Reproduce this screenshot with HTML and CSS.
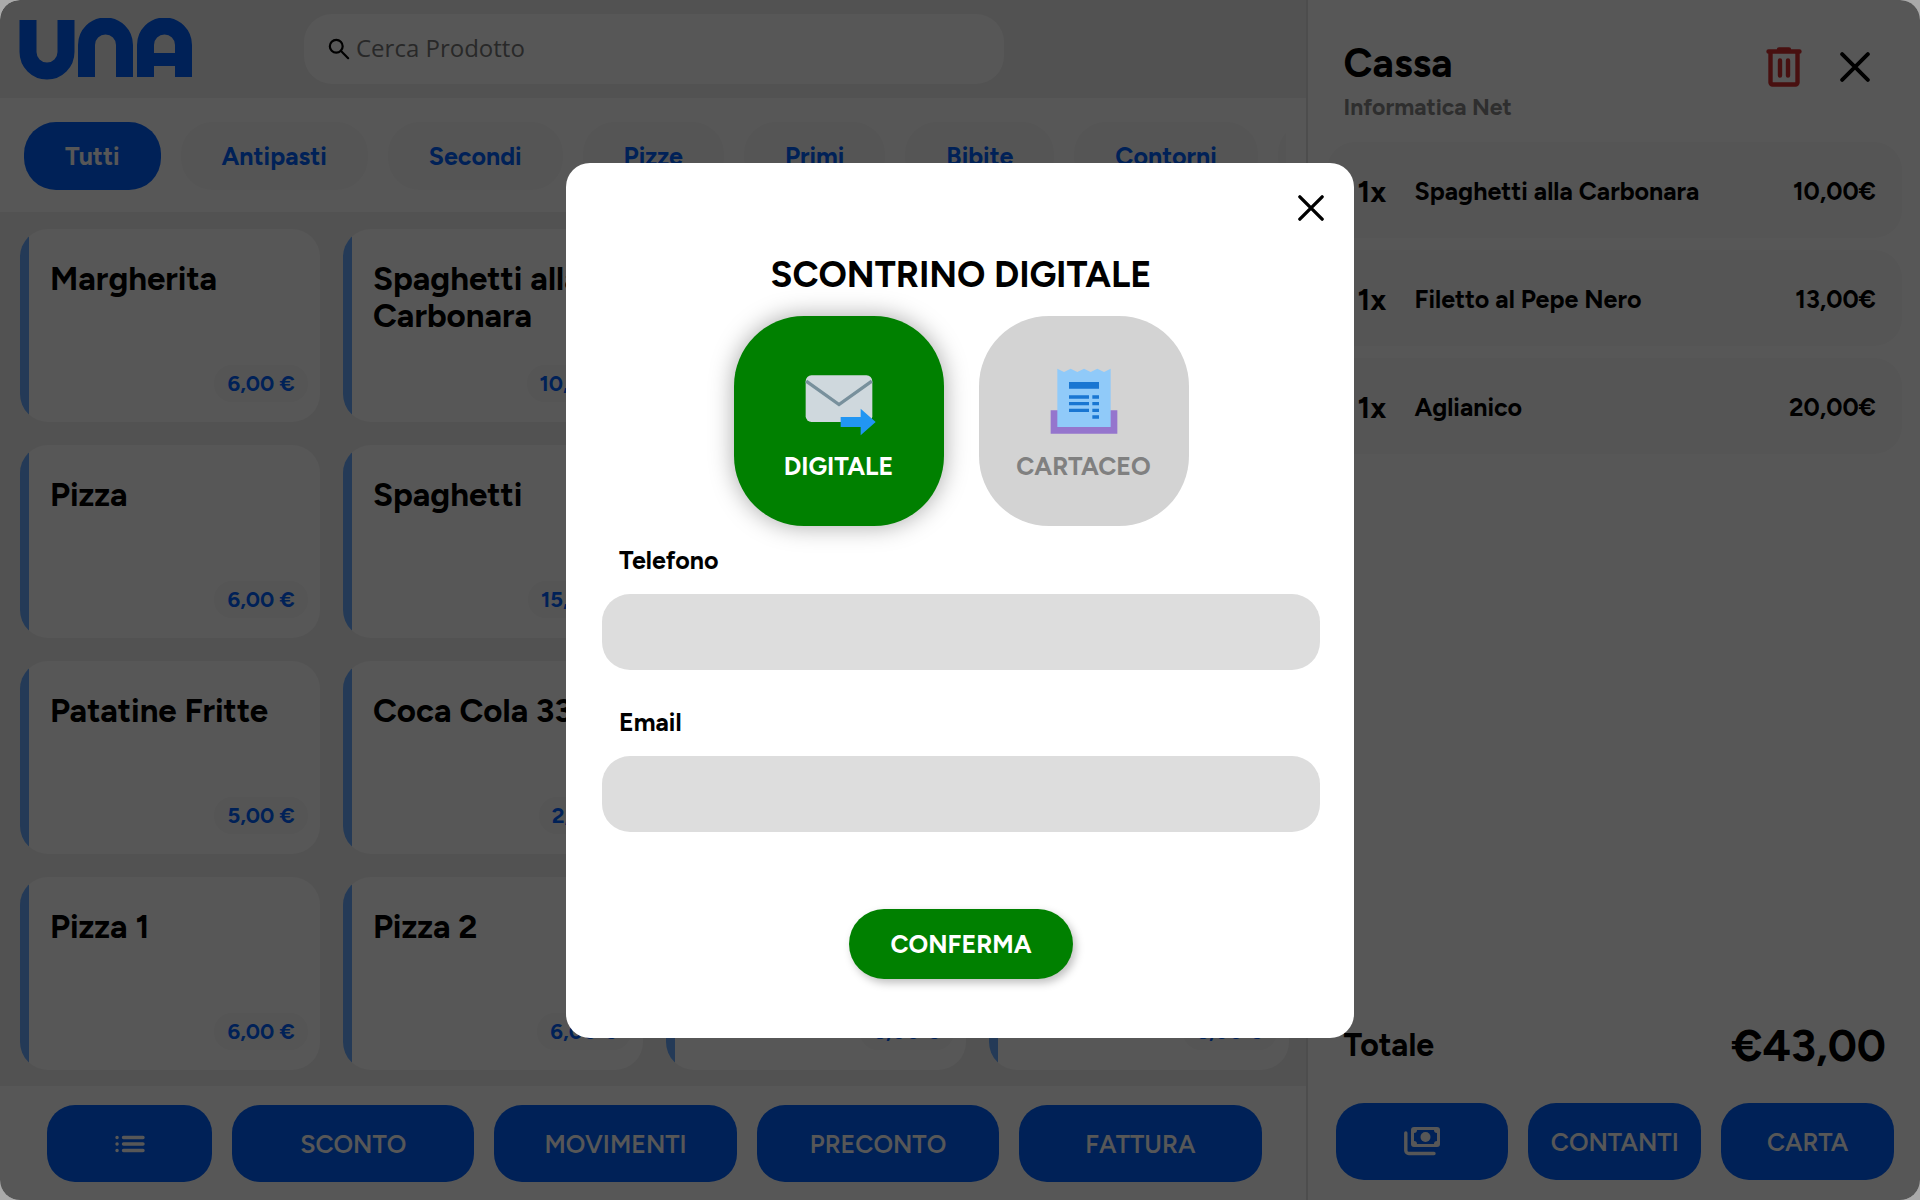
FILE: index.html
```html
<!DOCTYPE html>
<html lang="it">
<head>
<meta charset="utf-8">
<meta name="viewport" content="width=device-width, initial-scale=1">
<title>UNA - Cassa</title>
<link rel="stylesheet" href="styles.css">
</head>
<body>
<div class="app">
  <main class="shop">
    <header class="topbar">
      <svg class="logo" viewBox="0 0 174 62" role="img" aria-label="UNA">
        <g fill="none" stroke="currentColor" stroke-width="17">
          <path d="M9 2V34a19 19 0 0 0 38 0V2"/>
          <path d="M67.500 59V27a19 19 0 0 1 38 0V59"/>
          <path d="M126.500 59V27a19 19 0 0 1 38 0V59"/>
          <path d="M126 41.500H165" stroke-width="13"/>
        </g>
      </svg>
      <label class="search">
        <svg class="search-icon" viewBox="0 0 24 24" aria-hidden="true"><g fill="none" stroke="currentColor" stroke-width="2.400" stroke-linecap="round"><circle cx="9" cy="9" r="7"/><path d="M14.200 14.200L22 22"/></g></svg>
        <input type="search" placeholder="Cerca Prodotto" aria-label="Cerca Prodotto">
      </label>
    </header>
    <nav class="categories" aria-label="Categorie">
      <button class="pill active">Tutti</button>
      <button class="pill">Antipasti</button>
      <button class="pill">Secondi</button>
      <button class="pill">Pizze</button>
      <button class="pill">Primi</button>
      <button class="pill">Bibite</button>
      <button class="pill">Contorni</button>
      <button class="pill" aria-label="Altre categorie"></button>
    </nav>
    <section class="products" aria-label="Prodotti">
      <button class="card"><span class="name">Margherita</span><span class="price">6,00 €</span></button>
      <button class="card"><span class="name">Spaghetti alla Carbonara</span><span class="price">10,00 €</span></button>
      <button class="card" aria-label="Prodotto"></button>
      <button class="card" aria-label="Prodotto"></button>
      <button class="card"><span class="name">Pizza</span><span class="price">6,00 €</span></button>
      <button class="card"><span class="name">Spaghetti</span><span class="price">15,00 €</span></button>
      <button class="card" aria-label="Prodotto"></button>
      <button class="card" aria-label="Prodotto"></button>
      <button class="card"><span class="name">Patatine Fritte</span><span class="price">5,00 €</span></button>
      <button class="card"><span class="name">Coca Cola 33</span><span class="price">2,50 €</span></button>
      <button class="card" aria-label="Prodotto"></button>
      <button class="card" aria-label="Prodotto"></button>
      <button class="card"><span class="name">Pizza 1</span><span class="price">6,00 €</span></button>
      <button class="card"><span class="name">Pizza 2</span><span class="price">6,00 €</span></button>
      <button class="card" aria-label="Prodotto"><span class="price">6,00 €</span></button>
      <button class="card" aria-label="Prodotto"><span class="price">6,00 €</span></button>
    </section>
    <footer class="actions">
      <button class="action menu" aria-label="Elenco">
        <svg class="list-icon" viewBox="0 0 30 18" aria-hidden="true"><g fill="none" stroke="currentColor" stroke-width="3.400" stroke-linecap="round"><path d="M8.500 2.500H28M8.500 9H28M8.500 15.500H28M2 2.500h.1M2 9h.1M2 15.500h.1"/></g></svg>
      </button>
      <button class="action">SCONTO</button>
      <button class="action">MOVIMENTI</button>
      <button class="action">PRECONTO</button>
      <button class="action">FATTURA</button>
    </footer>
  </main>
  <aside class="checkout">
    <header class="checkout-head">
      <div class="checkout-titles">
        <h1>Cassa</h1>
        <p>Informatica Net</p>
      </div>
      <button class="icon-button danger" aria-label="Svuota">
        <svg class="trash-icon" viewBox="0 0 36 40" aria-hidden="true"><g fill="none" stroke="currentColor" stroke-width="4.400" stroke-linecap="round" stroke-linejoin="round"><path d="M4.500 5V35.500a2 2 0 0 0 2 2h23a2 2 0 0 0 2-2V5M2.500 4.500h31M13 2.500h10M14 13.500V28.500M22 13.500V28.500"/></g></svg>
      </button>
      <button class="icon-button" aria-label="Chiudi cassa">
        <svg class="close-icon large" viewBox="0 0 28 28" aria-hidden="true"><path d="M2 2L26 26M26 2L2 26" fill="none" stroke="currentColor" stroke-width="3.600" stroke-linecap="round"/></svg>
      </button>
    </header>
    <ul class="lines">
      <li><span class="qty">1x</span><span class="item">Spaghetti alla Carbonara</span><span class="cost">10,00€</span></li>
      <li><span class="qty">1x</span><span class="item">Filetto al Pepe Nero</span><span class="cost">13,00€</span></li>
      <li><span class="qty">1x</span><span class="item">Aglianico</span><span class="cost">20,00€</span></li>
    </ul>
    <p class="total"><span>Totale</span><strong>€43,00</strong></p>
    <div class="payments">
      <button class="action" aria-label="Pagamenti">
        <svg class="cash-icon" viewBox="0 0 36 32" aria-hidden="true"><path d="M1.800 7V24.500a3 3 0 0 0 3 3H30" fill="none" stroke="currentColor" stroke-width="3.400" stroke-linecap="round"/><path fill="currentColor" fill-rule="evenodd" d="M10 1H33a3 3 0 0 1 3 3V18a3 3 0 0 1-3 3H10A3 3 0 0 1 7 18V4A3 3 0 0 1 10 1ZM13 4a3 3 0 0 1-3 3V15a3 3 0 0 1 3 3H30a3 3 0 0 1 3-3V7a3 3 0 0 1-3-3Z"/><circle cx="21.500" cy="11" r="5" fill="currentColor"/></svg>
      </button>
      <button class="action">CONTANTI</button>
      <button class="action">CARTA</button>
    </div>
  </aside>
</div>
<div class="backdrop">
  <dialog class="receipt" open aria-labelledby="receipt-title">
    <button class="icon-button dismiss" aria-label="Chiudi">
      <svg class="close-icon" viewBox="0 0 28 28" aria-hidden="true"><path d="M2 2L26 26M26 2L2 26" fill="none" stroke="currentColor" stroke-width="3.600" stroke-linecap="round"/></svg>
    </button>
    <h2 id="receipt-title">SCONTRINO DIGITALE</h2>
    <div class="options">
      <button class="option selected" aria-pressed="true">
        <svg class="option-icon" viewBox="0 0 48 48" aria-hidden="true"><rect x="4" y="8" width="40" height="28" rx="3.500" fill="#cfd8dd"/><path d="M4.300 11.500L24 25.500L43.700 11.500" fill="none" stroke="#78909c" stroke-width="2"/><path d="M25 33H37V28L46 36L37 44V39H25Z" fill="#2196f3"/></svg>
        <span>DIGITALE</span>
      </button>
      <button class="option" aria-pressed="false">
        <svg class="option-icon" viewBox="0 0 48 48" aria-hidden="true"><path d="M4 29H44V43H4Z" fill="#9575cd"/><path d="M8 4L12 6L16 4L20 6L24 4L28 6L32 4L36 6L40 4V39H8Z" fill="#90caf9"/><path d="M15 12H33V16H15ZM15 20H27V22H15ZM29 20H33V22H29ZM15 24H27V26H15ZM29 24H33V26H29ZM15 28H27V30H15ZM29 28H33V30H29ZM29 32H33V34H29Z" fill="#1976d2"/></svg>
        <span>CARTACEO</span>
      </button>
    </div>
    <form class="fields">
      <label for="telefono">Telefono</label>
      <input id="telefono" type="tel">
      <label for="email">Email</label>
      <input id="email" type="email">
      <button class="confirm" type="button">CONFERMA</button>
    </form>
  </dialog>
</div>
</body>
</html>
```
FILE: styles.css
```css
:root {
  --blue: #0061ff;
  --blue-soft: #69aaff;
  --grey: #f0f0f0;
  --soft: #f9f9f9;
  --green: #008000;
}

* {
  box-sizing: border-box;
}

html {
  background: #aaa;
}

body {
  margin: 0;
  font-family: Figtree, Inter, "Liberation Sans", sans-serif;
  font-weight: 700;
  color: #000;
}

button,
input {
  border: 0;
  font: inherit;
  color: inherit;
}

button {
  padding: 0;
  background: none;
  cursor: pointer;
}

h1,
h2,
p,
ul {
  margin: 0;
  padding: 0;
}

svg {
  display: block;
}

.app {
  display: grid;
  grid-template-columns: minmax(0, 68fr) minmax(0, 32fr);
  min-height: 100vh;
  border-radius: 20px;
  overflow: hidden;
  background: #fff;
}

/* Catalogue side */
.shop {
  display: flex;
  flex-direction: column;
}

.topbar {
  display: flex;
  align-items: center;
  gap: 111px;
  height: 98px;
  padding: 0 19px;
  background: var(--grey);
}

.logo {
  width: 174px;
  height: 62px;
  color: var(--blue);
}

.search {
  display: flex;
  align-items: center;
  gap: 6px;
  flex: 0 1 700px;
  height: 70px;
  padding: 0 24px;
  border-radius: 28px;
  background: #fff;
}

.search-icon {
  width: 22px;
  height: 22px;
}

.search input {
  flex: 1;
  min-width: 0;
  padding: 0 0 3px;
  background: none;
  outline: 0;
  font-family: "Open Sans", sans-serif;
  font-size: 24px;
  font-weight: 400;
}

.search input::placeholder {
  color: #777;
}

.categories {
  display: flex;
  gap: 20px;
  margin-right: 20px;
  padding: 24px 0 22px 24px;
  overflow: hidden;
}

.pill {
  flex: none;
  min-width: 120px;
  height: 68px;
  padding: 0 41px;
  border-radius: 32px;
  background: var(--soft);
  color: var(--blue);
  font-size: 25px;
}

.pill.active {
  background: var(--blue);
  color: #fff;
}

.products {
  display: grid;
  flex: 1;
  grid-template-columns: repeat(4, minmax(0, 1fr));
  grid-auto-rows: 193px;
  gap: 23px;
  padding: 17px 17px 16px 20px;
  background: var(--grey);
}

.card {
  display: flex;
  flex-direction: column;
  padding: 31px 12px 20px 30px;
  border-radius: 28px;
  background: linear-gradient(to right, var(--blue-soft) 9px, #fff 9px);
  text-align: left;
}

.name {
  font-size: 33px;
  line-height: 37px;
}

.price {
  align-self: flex-end;
  margin-top: auto;
  padding: 0 13px;
  border-radius: 18px;
  background: var(--soft);
  color: var(--blue);
  font-size: 22px;
  line-height: 37px;
}

.actions {
  display: flex;
  gap: 20px;
  padding: 19px 44px 18px 47px;
}

.action {
  display: flex;
  flex: 1;
  align-items: center;
  justify-content: center;
  height: 77px;
  border-radius: 28px;
  background: var(--blue);
  color: #fff;
  font-size: 25px;
  font-weight: 600;
}

.action.menu {
  flex: 0 0 165px;
}

.list-icon {
  width: 30px;
  height: 18px;
}

/* Checkout side */
.checkout {
  display: flex;
  flex-direction: column;
  padding: 39px 18px 20px 19px;
  border-left: 2px solid #e0e0e0;
}

.checkout-head {
  display: flex;
  gap: 38px;
  padding: 0 32px 14px 17px;
}

.checkout-titles {
  flex: 1;
}

h1 {
  font-size: 40px;
  line-height: 48px;
}

.checkout-titles p {
  color: #888;
  font-size: 23px;
  line-height: 41px;
}

.icon-button {
  height: 56px;
}

.danger {
  color: #d32f2f;
}

.trash-icon {
  width: 36px;
  height: 40px;
}

.close-icon {
  width: 26px;
  height: 26px;
}

.close-icon.large {
  width: 30px;
  height: 30px;
}

.lines {
  display: grid;
  gap: 12px;
  list-style: none;
}

.lines li {
  display: flex;
  align-items: center;
  height: 96px;
  padding: 2px 26px 0 31px;
  border-radius: 28px;
  background: var(--soft);
  font-size: 25px;
}

.qty {
  width: 57px;
  font-size: 30px;
}

.item {
  flex: 1;
}

.total {
  display: flex;
  align-items: center;
  justify-content: space-between;
  margin-top: auto;
  padding: 0 16px 30px 17px;
  font-size: 32px;
  line-height: 56px;
}

.total strong {
  font-size: 45px;
  font-weight: 700;
}

.payments {
  display: flex;
  gap: 20px;
  padding: 0 8px 0 9px;
}

.cash-icon {
  width: 36px;
  height: 32px;
}

/* Digital receipt dialog */
.backdrop {
  position: fixed;
  inset: 0;
  display: grid;
  place-items: center;
  border-radius: 20px;
  background: rgba(0, 0, 0, 0.66);
}

.receipt {
  position: relative;
  inset: auto;
  display: flex;
  flex-direction: column;
  width: 788px;
  max-width: 94%;
  margin: 0;
  padding: 17px 34px 59px 36px;
  border: 0;
  border-radius: 24px;
  background: #fff;
  color: #000;
}

.dismiss {
  align-self: flex-end;
  height: 56px;
  margin-right: -4px;
}

.receipt h2 {
  padding: 14px 0 16px;
  font-size: 36px;
  line-height: 50px;
  text-align: center;
}

.options {
  display: flex;
  justify-content: center;
  gap: 35px;
}

.option {
  display: flex;
  flex-direction: column;
  align-items: center;
  justify-content: center;
  gap: 6px;
  width: 210px;
  height: 210px;
  padding-top: 4px;
  border-radius: 70px;
  background: #d3d3d3;
  color: #808080;
  font-size: 25px;
  line-height: 36px;
}

.option.selected {
  background: var(--green);
  box-shadow: 0 0 25px rgba(0, 0, 0, 0.35);
  color: #fff;
}

.option-icon {
  width: 80px;
  height: 80px;
}

.fields {
  display: flex;
  flex-direction: column;
}

.fields label {
  padding: 16px 17px;
  font-size: 25px;
  line-height: 36px;
}

.fields input {
  height: 76px;
  padding: 0 24px;
  border-radius: 28px;
  background: #ddd;
  font-size: 25px;
}

.fields input + label {
  padding-top: 34px;
}

.confirm {
  align-self: center;
  width: 224px;
  height: 70px;
  margin-top: 77px;
  border-radius: 35px;
  background: var(--green);
  box-shadow: 3px 4px 8px rgba(0, 0, 0, 0.25);
  color: #fff;
  font-size: 25px;
}
```
